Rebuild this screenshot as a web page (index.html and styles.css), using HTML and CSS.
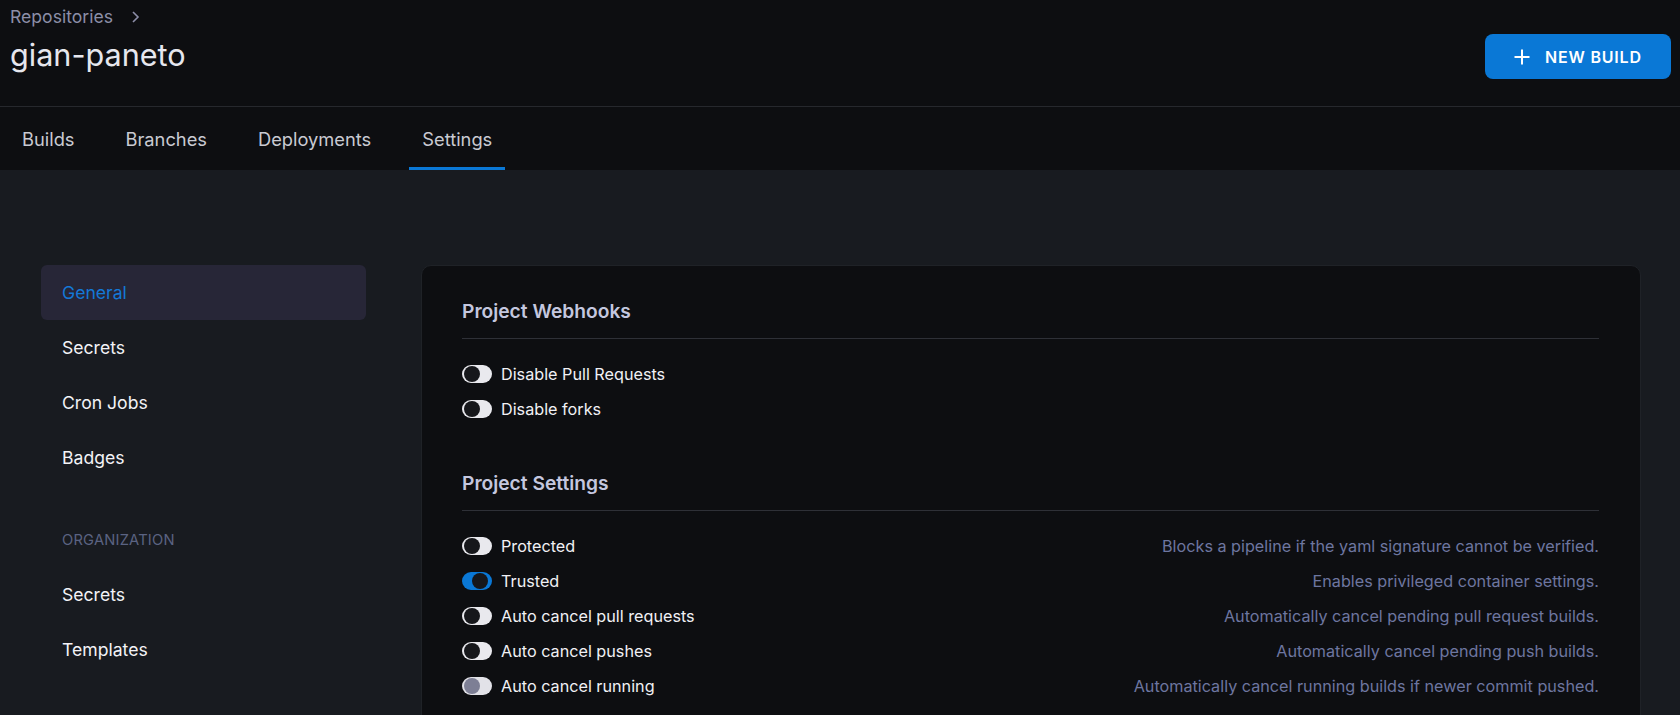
FILE: index.html
```html
<!DOCTYPE html>
<html lang="en">
<head>
<meta charset="utf-8">
<title>gian-paneto - Settings</title>
<link rel="stylesheet" href="styles.css">
</head>
<body>
<header class="topbar">
  <div class="heading">
    <div class="crumbs">
      <span class="crumb">Repositories</span>
      <svg class="chev" width="10" height="12" viewBox="0 0 10 12"><polyline points="2,1 7,6 2,11" fill="none" stroke="currentColor" stroke-width="1.6"/></svg>
    </div>
    <h1 class="title">gian-paneto</h1>
  </div>
  <button class="btn-primary">
    <svg class="plus" width="16" height="16" viewBox="0 0 16 16"><path d="M8 0.5v15M0.5 8h15" stroke="currentColor" stroke-width="2" fill="none"/></svg>
    <span>NEW BUILD</span>
  </button>
</header>
<nav class="tabs">
  <a class="tab">Builds</a>
  <a class="tab">Branches</a>
  <a class="tab">Deployments</a>
  <a class="tab active">Settings</a>
</nav>
<main class="content">
  <aside class="sidebar">
    <a class="side-item active">General</a>
    <a class="side-item">Secrets</a>
    <a class="side-item">Cron Jobs</a>
    <a class="side-item">Badges</a>
    <div class="side-label">ORGANIZATION</div>
    <a class="side-item">Secrets</a>
    <a class="side-item">Templates</a>
  </aside>
  <section class="card">
    <div class="group">
      <h2 class="group-title">Project Webhooks</h2>
      <div class="rows">
        <div class="row"><span class="toggle"></span><span class="label">Disable Pull Requests</span></div>
        <div class="row"><span class="toggle"></span><span class="label">Disable forks</span></div>
      </div>
    </div>
    <div class="group">
      <h2 class="group-title">Project Settings</h2>
      <div class="rows">
        <div class="row"><span class="toggle"></span><span class="label">Protected</span><span class="desc">Blocks a pipeline if the yaml signature cannot be verified.</span></div>
        <div class="row"><span class="toggle on"></span><span class="label">Trusted</span><span class="desc">Enables privileged container settings.</span></div>
        <div class="row"><span class="toggle"></span><span class="label">Auto cancel pull requests</span><span class="desc">Automatically cancel pending pull request builds.</span></div>
        <div class="row"><span class="toggle"></span><span class="label">Auto cancel pushes</span><span class="desc">Automatically cancel pending push builds.</span></div>
        <div class="row"><span class="toggle disabled"></span><span class="label">Auto cancel running</span><span class="desc">Automatically cancel running builds if newer commit pushed.</span></div>
      </div>
    </div>
  </section>
</main>
</body>
</html>
```
FILE: styles.css
```css
* { box-sizing: border-box; }
html, body { margin: 0; padding: 0; }
body {
  background: #0d0e11;
  color: #e8e8ee;
  font-family: Inter, "Noto Sans", sans-serif;
  overflow: hidden;
  height: 715px;
}
.topbar {
  height: 107px;
  display: flex;
  justify-content: space-between;
  align-items: flex-start;
  padding: 0 9px 0 10px;
  border-bottom: 1px solid #26282d;
}
.crumbs {
  display: flex;
  align-items: center;
  gap: 18px;
  height: 32px;
  color: #8c8ea8;
  font-size: 17.6px;
}
.chev { margin-top: 1px; }
.title {
  margin: 4px 0 0;
  font-size: 30.6px;
  font-weight: 400;
  line-height: 38px;
  color: #e6e7ee;
}
.btn-primary {
  margin-top: 34px;
  height: 45px;
  width: 186px;
  display: flex;
  align-items: center;
  gap: 15px;
  padding: 0 0 0 29px;
  border: none;
  border-radius: 8px;
  background: #0a78d6;
  color: #fff;
  font-family: inherit;
  font-size: 16px;
  font-weight: 600;
  letter-spacing: 0.8px;
}
.plus { display: block; }
.tabs {
  height: 63px;
  display: flex;
  gap: 25px;
  padding-left: 9px;
}
.tab {
  display: flex;
  align-items: center;
  padding: 3px 13px 0;
  border-bottom: 3px solid transparent;
  color: #c9cad2;
  font-size: 18.3px;
}
.tab.active { border-bottom-color: #0a78d6; }
.content {
  background: #181b20;
  height: 545px;
  display: flex;
  align-items: flex-start;
  padding: 95px 39px 0 41px;
  gap: 55px;
}
.sidebar {
  width: 325px;
  flex: none;
  display: flex;
  flex-direction: column;
}
.side-item {
  height: 55px;
  display: flex;
  align-items: center;
  padding-left: 21px;
  border-radius: 6px;
  font-size: 17.6px;
  color: #f3f3f7;
}
.side-item.active {
  background: #272637;
  color: #1478d6;
}
.side-label {
  padding: 45px 0 17px 21px;
  line-height: 20px;
  font-size: 14.7px;
  color: #5b6382;
  letter-spacing: 0.2px;
}
.card {
  flex: 1;
  background: #0d0e11;
  border: 1px solid #1f2227;
  border-radius: 10px;
  padding: 33px 41px 40px 40px;
}
.group + .group { margin-top: 45px; }
.group-title {
  margin: 0;
  line-height: 24px;
  font-size: 19.2px;
  font-weight: 600;
  color: #c4c7df;
  padding-bottom: 15px;
  border-bottom: 1px solid #2e3037;
}
.rows { padding-top: 17px; }
.row {
  height: 35px;
  display: flex;
  align-items: center;
}
.toggle {
  width: 30px;
  height: 18px;
  border-radius: 9px;
  background: #e9e9ee;
  position: relative;
  flex: none;
}
.toggle::after {
  content: "";
  position: absolute;
  left: 1.5px;
  top: 1px;
  width: 16px;
  height: 16px;
  border-radius: 50%;
  background: #16171b;
}
.toggle.on { background: #0a78d6; }
.toggle.on::after { left: 9.5px; }
.toggle.disabled { background: #e2e2e8; }
.toggle.disabled::after { background: #7d7f95; }
.label {
  margin-left: 9px;
  font-size: 16.2px;
  color: #f1f1f5;
}
.desc {
  margin-left: auto;
  font-size: 16.2px;
  color: #6d76a0;
}
```
